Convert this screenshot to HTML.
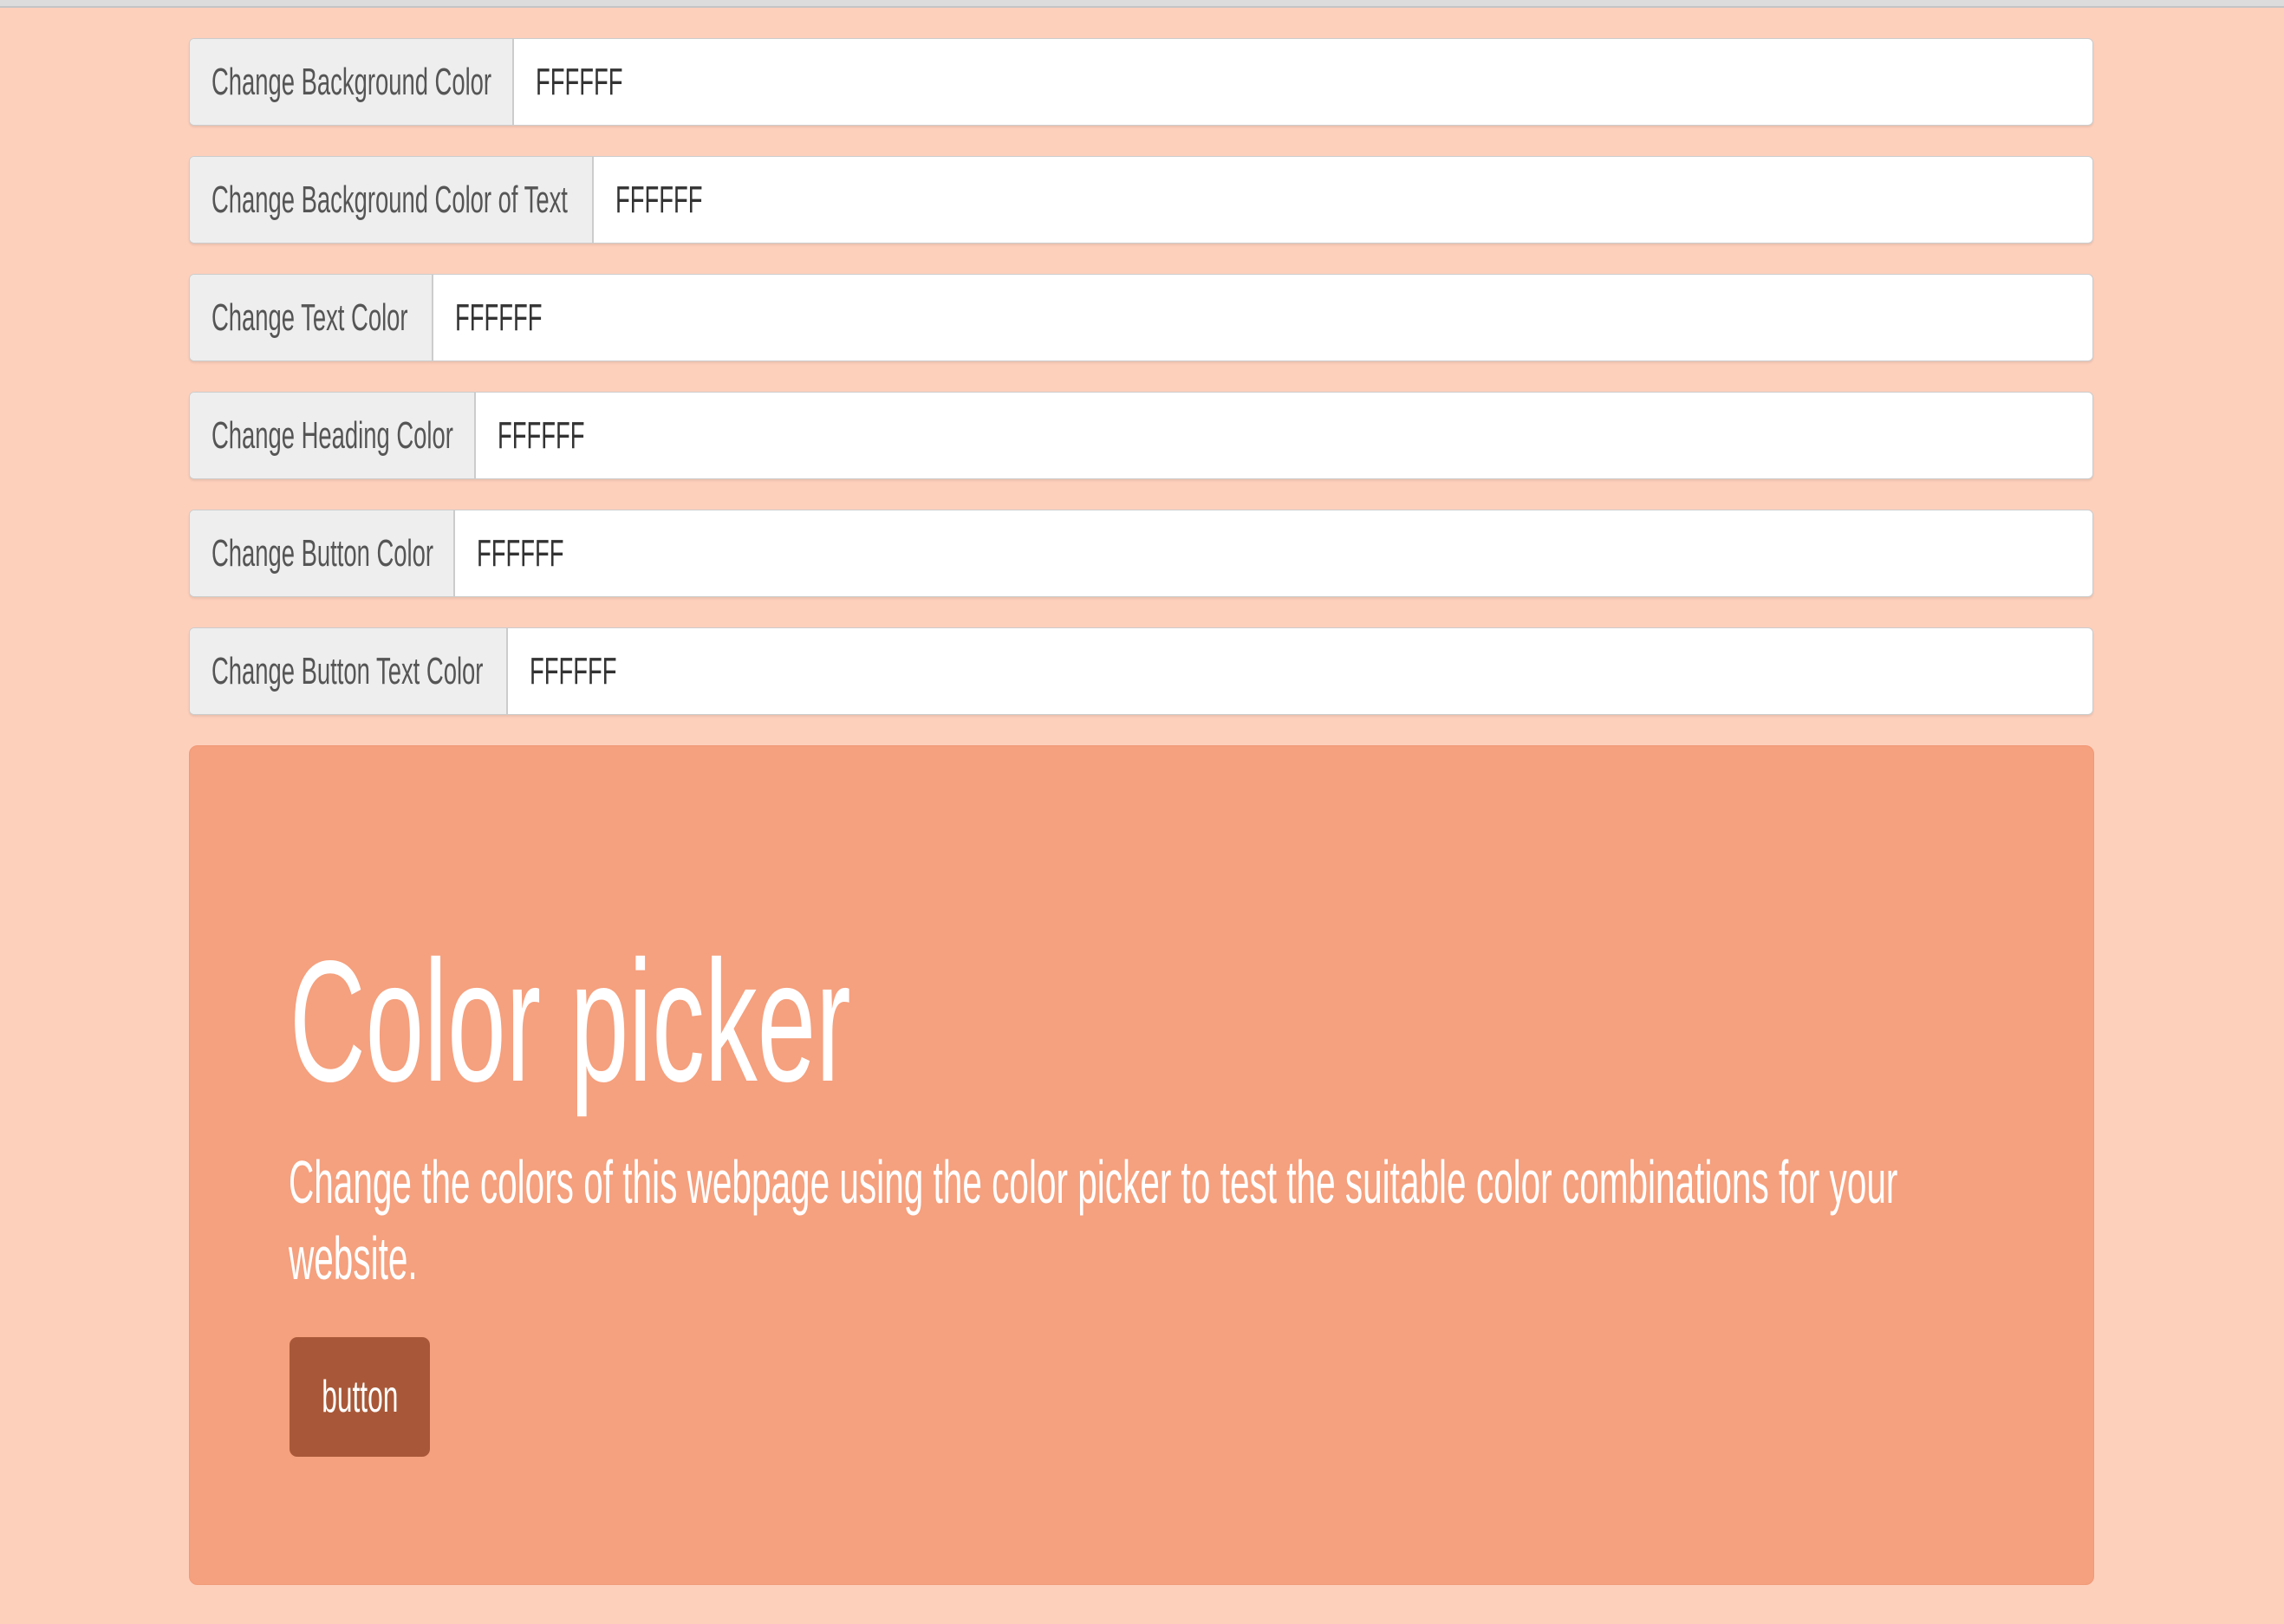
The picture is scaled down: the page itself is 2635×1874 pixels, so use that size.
<!DOCTYPE html>
<html><head><meta charset="utf-8"><style>
html,body{margin:0;padding:0}
body{width:2635px;height:1874px;background:#fdd0bc;position:relative;overflow:hidden;font-family:"Liberation Sans",sans-serif}
.top{position:absolute;left:0;top:0;width:2635px;height:7px;background:#dcdcdc;border-bottom:2px solid #c4c4c4}
.row{position:absolute;left:218px;width:2195px;height:99px;border:1px solid #ccc;border-radius:6px;background:#fff;display:flex;overflow:hidden;box-shadow:0 2px 2px rgba(0,0,0,.08)}
.add{background:#eee;border-right:2px solid #ccc;display:flex;align-items:center;padding-left:25px;box-sizing:border-box;color:#555;font-size:44px;white-space:nowrap}
.val{display:flex;align-items:center;padding-left:25px;color:#333;font-size:44px;white-space:nowrap}
.s{display:inline-block;transform:scaleX(.623);transform-origin:left center}
.jumbo{position:absolute;left:218px;top:860px;width:2196px;height:967px;background:#f5a07e;border-radius:10px;border:1px solid #f09a78}
h1{position:absolute;left:334px;top:1080px;margin:0;font-size:199px;line-height:1;font-weight:normal;color:#fff;white-space:nowrap}
p{position:absolute;left:333px;top:1320px;margin:0;font-size:70px;line-height:88px;color:#fff;white-space:nowrap}
.btn{position:absolute;left:334px;top:1543px;width:162px;height:138px;background:#a85838;border-radius:9px;color:#fff;font-size:52px;display:flex;align-items:center;justify-content:center}
</style></head><body>
<div class="top"></div>
<div class="row" style="top:44px"><div class="add" style="width:374px"><span class="s">Change Background Color</span></div><div class="val"><span class="s">FFFFFF</span></div></div>
<div class="row" style="top:180px"><div class="add" style="width:466px"><span class="s">Change Background Color of Text</span></div><div class="val"><span class="s">FFFFFF</span></div></div>
<div class="row" style="top:316px"><div class="add" style="width:281px"><span class="s">Change Text Color</span></div><div class="val"><span class="s">FFFFFF</span></div></div>
<div class="row" style="top:452px"><div class="add" style="width:330px"><span class="s">Change Heading Color</span></div><div class="val"><span class="s">FFFFFF</span></div></div>
<div class="row" style="top:588px"><div class="add" style="width:306px"><span class="s">Change Button Color</span></div><div class="val"><span class="s">FFFFFF</span></div></div>
<div class="row" style="top:724px"><div class="add" style="width:367px"><span class="s">Change Button Text Color</span></div><div class="val"><span class="s">FFFFFF</span></div></div>
<div class="jumbo"></div>
<h1><span class="s" style="transform:scaleX(.61);transform-origin:left top">Color picker</span></h1>
<p><span class="s" style="transform:scaleX(.579);transform-origin:left top">Change the colors of this webpage using the color picker to test the suitable color combinations for your</span><br><span class="s" style="transform:scaleX(.579);transform-origin:left top">website.</span></p>
<div class="btn"><span style="display:inline-block;transform:scaleX(.61)">button</span></div>
</body></html>
